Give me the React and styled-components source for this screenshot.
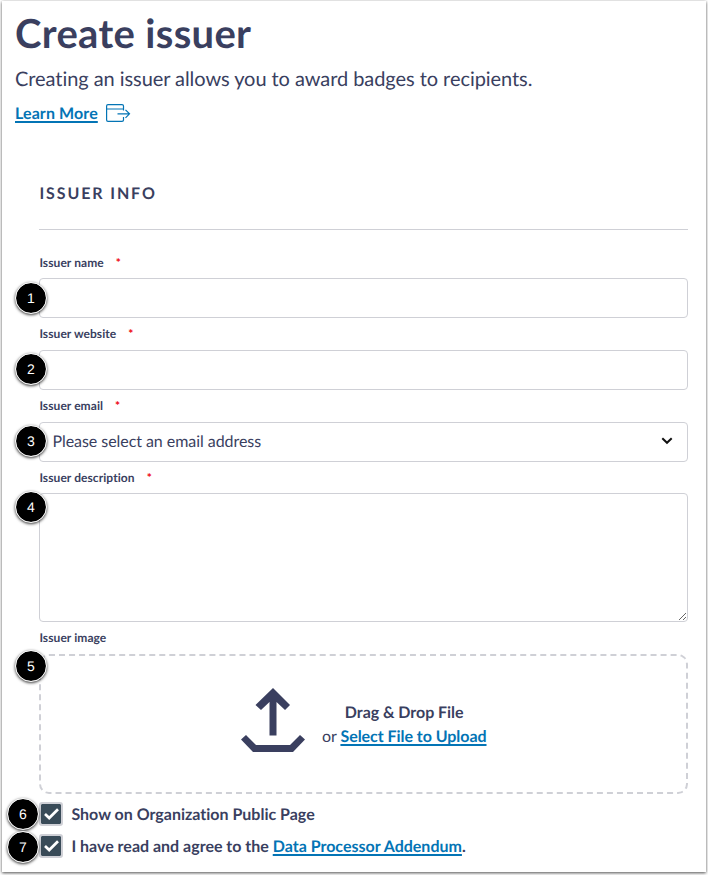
import React, { useState } from "react";
import styled, { createGlobalStyle } from "styled-components";

const GlobalStyle = createGlobalStyle`
  * {
    box-sizing: border-box;
  }
  body {
    margin: 0;
    background: #fff;
    color: #3a3f5f;
    font-family: Lato, sans-serif;
    font-size: 16px;
    font-variant-ligatures: none;
    text-rendering: geometricPrecision;
  }
`;

const Backdrop = styled.div`
  min-height: 875px;
  padding: 1px 2px 0;
  background: #fff;
`;
const Page = styled.main`
  width: 704px;
  height: 871px;
  padding: 8px 18px 0 13px;
  background: #fff;
  box-shadow: 0 1px 3px rgba(0, 0, 0, 0.7);
`;
const Title = styled.h1`
  margin: 0;
  font-size: 40px;
  font-weight: 700;
  line-height: 49px;
  letter-spacing: 0.33px;
`;
const Subtitle = styled.p`
  margin: 7px 0 0;
  font-size: 20px;
  line-height: 28px;
  letter-spacing: -0.06px;
`;
const Link = styled.a`
  color: #0374b5;
  font-weight: 700;
  text-decoration: underline;
  text-decoration-thickness: 1.5px;
  text-underline-offset: 1.5px;
  text-decoration-skip-ink: none;
`;
const LearnMore = styled.div`
  display: flex;
  align-items: center;
  gap: 8px;
  height: 24px;
  margin-top: 8px;
  letter-spacing: 0.1px;
`;
const Form = styled.form`
  margin: 57px 0 0 24.4px;
`;
const SectionTitle = styled.h2`
  height: 48px;
  margin: 0 0 16.5px;
  border-bottom: 1px solid #cfd0d6;
  font-size: 16px;
  font-weight: 700;
  line-height: 24px;
  letter-spacing: 1.9px;
`;
const Field = styled.div`
  position: relative;
  margin-bottom: ${(p) => p.$gap || "0"};
`;
const Label = styled.label`
  display: flex;
  gap: 12px;
  height: ${(p) => p.$height || "31.7px"};
  font-size: 12px;
  font-weight: 700;
  line-height: 31px;
  letter-spacing: 0.07px;
`;
const Required = styled.span`
  color: #ee0612;
`;
const Input = styled.input`
  display: block;
  width: 100%;
  height: 40px;
  padding: 0 13px;
  border: 1px solid #cfd0d6;
  border-radius: 4px;
  outline: none;
  font: inherit;
`;
const Select = styled.div`
  display: flex;
  align-items: center;
  justify-content: space-between;
  height: 40px;
  padding: 0 14px 1px 12px;
  border: 1px solid #cfd0d6;
  border-radius: 4px;
  letter-spacing: -0.05px;
`;
const TextArea = styled.textarea`
  display: block;
  width: 100%;
  height: 128.5px;
  border: 1px solid #cfd0d6;
  border-radius: 4px;
  outline: none;
  resize: vertical;
`;
const DropZone = styled.div`
  display: flex;
  align-items: center;
  justify-content: center;
  gap: 17px;
  height: 140px;
  border: 2px dashed #cfd0d6;
  border-radius: 10px;
  text-align: center;
  line-height: 24px;
`;
const DropText = styled.div`
  padding-top: 1px;
  letter-spacing: -0.04px;
`;
const Strong = styled.strong`
  font-weight: 700;
`;
const CheckRow = styled.div`
  position: relative;
  display: flex;
  align-items: center;
  gap: 8px;
  height: 32px;
  font-weight: 700;
`;
const CheckBox = styled.button`
  display: flex;
  align-items: center;
  justify-content: center;
  width: 24px;
  height: 24px;
  padding: 0;
  border: 2px solid #cfd0d6;
  border-radius: 3px;
  background: ${(p) => (p.$checked ? "#394b58" : "#fff")};
  background-clip: padding-box;
`;
// Step marker hanging over the left edge of a field
const Step = styled.span`
  position: absolute;
  top: ${(p) => p.$top};
  left: ${(p) => p.$left || "-24.4px"};
  z-index: 1;
  width: 32px;
  height: 32px;
  border: 1px solid #fff;
  border-radius: 50%;
  background: #000;
  background-clip: padding-box;
  box-shadow: 0 1px 3px rgba(0, 0, 0, 0.75);
  color: #fff;
  font-family: "Liberation Sans", sans-serif;
  font-size: 14px;
  font-weight: 400;
  line-height: 30px;
  text-align: center;
`;
const UploadMark = styled.svg`
  margin-bottom: 8px;
`;

const WindowIcon = () => (
  <svg width="25" height="18" viewBox="0 0 25 18" fill="none" stroke="#0374b5" strokeWidth="1.2">
    <path d="M17.5 6.5V2Q17.5.6 16 .6H2Q.6.6.6 2V16Q.6 17.4 2 17.4H16Q17.5 17.4 17.5 16V13M.6 5H17.5M11.5 9.8H23.5M19.5 5.8L23.5 9.8L19.5 13.8" />
  </svg>
);

const UploadIcon = () => (
  <UploadMark width="64" height="65" viewBox="0 0 64 65" fill="#3a3f5f">
    <path d="M32 0L49 17L44 22L35.5 14V47.5H28.5V14L20 22L14.5 17Z" />
    <path d="M0 51.5L5 47L15 57H49L59 47L64 51.5L52 64H12Z" />
  </UploadMark>
);

const Chevron = () => (
  <svg width="12" height="8" viewBox="0 0 12 8" fill="none" stroke="#111" strokeWidth="2">
    <path d="M1.3 1.2L6 5.8L10.7 1.2" />
  </svg>
);

const Check = () => (
  <svg width="15" height="12" viewBox="0 0 15 12" fill="none" stroke="#fff" strokeWidth="2.7">
    <path d="M1 6L5.2 10L14 1.2" />
  </svg>
);

const FieldLabel = ({ text, required, height }) => (
  <Label $height={height}>
    {text}
    {required && <Required>*</Required>}
  </Label>
);

const App = () => {
  const [isPublic, setIsPublic] = useState(true);
  const [agreed, setAgreed] = useState(true);

  return (
    <>
      <GlobalStyle />
      <Backdrop>
        <Page>
          <Title>Create issuer</Title>
          <Subtitle>Creating an issuer allows you to award badges to recipients.</Subtitle>
          <LearnMore>
            <Link>Learn More</Link>
            <WindowIcon />
          </LearnMore>
          <Form>
            <SectionTitle>ISSUER INFO</SectionTitle>
            <Field>
              <FieldLabel text="Issuer name" required />
              <Input />
              <Step $top="35.5px">1</Step>
            </Field>
            <Field>
              <FieldLabel text="Issuer website" required />
              <Input />
              <Step $top="35px">2</Step>
            </Field>
            <Field>
              <FieldLabel text="Issuer email" required />
              <Select>
                Please select an email address
                <Chevron />
              </Select>
              <Step $top="35.5px">3</Step>
            </Field>
            <Field>
              <FieldLabel text="Issuer description" required />
              <TextArea />
              <Step $top="29.5px">4</Step>
            </Field>
            <Field $gap="4px">
              <FieldLabel text="Issuer image" height="32.4px" />
              <DropZone>
                <UploadIcon />
                <DropText>
                  <Strong>Drag &amp; Drop File</Strong>
                  <br />
                  or <Link>Select File to Upload</Link>
                </DropText>
              </DropZone>
              <Step $top="28.5px">5</Step>
            </Field>
            <CheckRow>
              <Step $top="0px" $left="-32.4px">6</Step>
              <CheckBox type="button" $checked={isPublic} onClick={() => setIsPublic(!isPublic)}>
                {isPublic && <Check />}
              </CheckBox>
              <span>Show on Organization Public Page</span>
            </CheckRow>
            <CheckRow>
              <Step $top="1px" $left="-32.4px">7</Step>
              <CheckBox type="button" $checked={agreed} onClick={() => setAgreed(!agreed)}>
                {agreed && <Check />}
              </CheckBox>
              <span>
                I have read and agree to the <Link>Data Processor Addendum</Link>.
              </span>
            </CheckRow>
          </Form>
        </Page>
      </Backdrop>
    </>
  );
};

export default App;
